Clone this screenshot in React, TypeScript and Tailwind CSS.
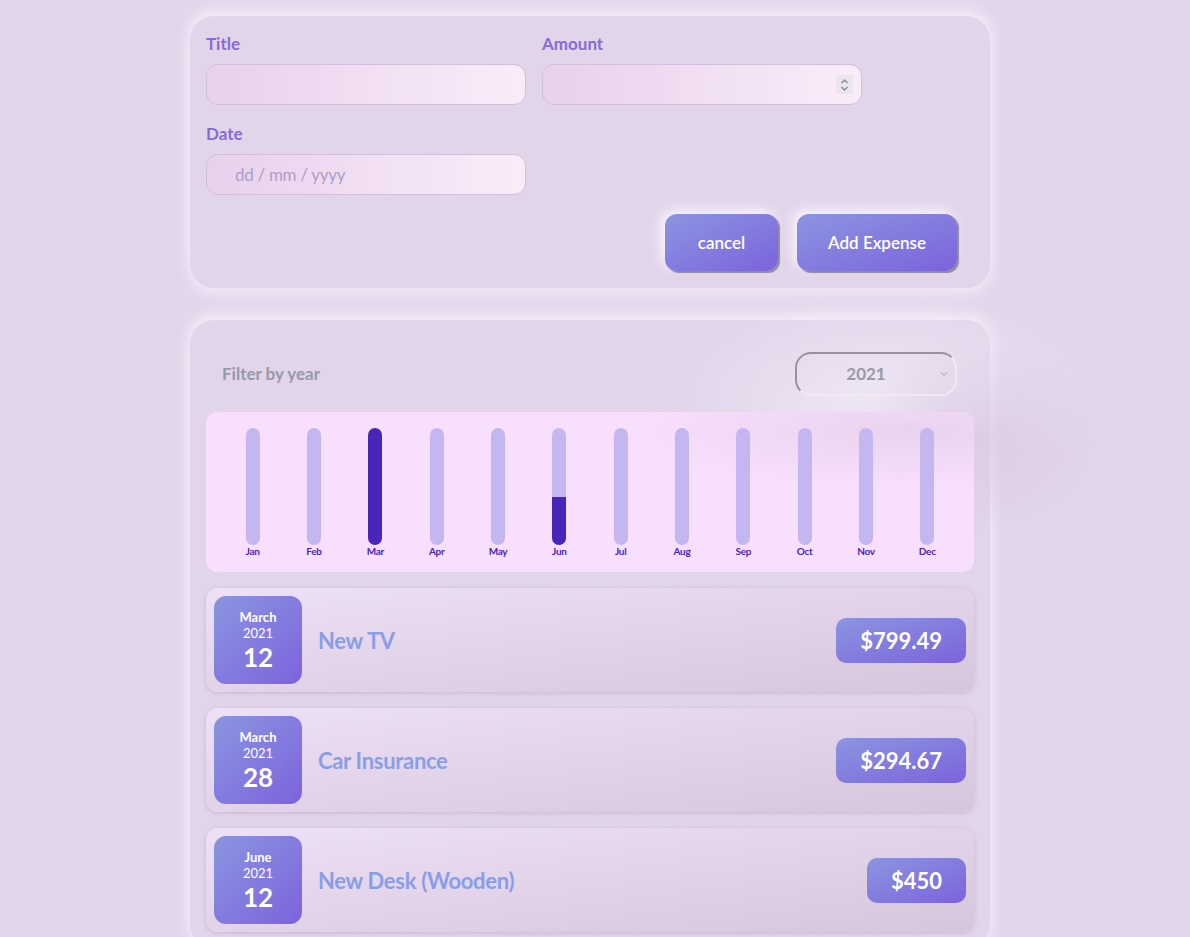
import { ChevronDown } from 'lucide-react';

const MONTHS = [
  { label: 'Jan', fill: 0 },
  { label: 'Feb', fill: 0 },
  { label: 'Mar', fill: 100 },
  { label: 'Apr', fill: 0 },
  { label: 'May', fill: 0 },
  { label: 'Jun', fill: 41 },
  { label: 'Jul', fill: 0 },
  { label: 'Aug', fill: 0 },
  { label: 'Sep', fill: 0 },
  { label: 'Oct', fill: 0 },
  { label: 'Nov', fill: 0 },
  { label: 'Dec', fill: 0 },
];

const EXPENSES = [
  { month: 'March', year: '2021', day: '12', title: 'New TV', amount: '$799.49' },
  { month: 'March', year: '2021', day: '28', title: 'Car Insurance', amount: '$294.67' },
  { month: 'June', year: '2021', day: '12', title: 'New Desk (Wooden)', amount: '$450' },
];

const font = { fontFamily: '"Source Sans Pro", Lato, "Noto Sans", sans-serif' };

const inputCls = 'h-[41px] rounded-xl border border-[#d3bfd9] bg-gradient-to-r from-[#e7d1eb] to-[#fbecfa]';
const labelCls = 'block text-[17px] font-bold text-[#8a6ad9] mb-2 leading-6';
const btnCls =
  'h-[57px] rounded-xl bg-gradient-to-br from-[#8b95e0] to-[#7c62dc] text-white text-[17px] font-semibold shadow-[2px_2px_1px_#8f8a9a,-4px_-4px_12px_#fbf4fd]';

export default function App() {
  return (
    <div className="min-h-[937px] bg-[#e3d6eb] pt-4 overflow-hidden" style={font}>
      <div className="w-[800px] ml-[190px] flex flex-col gap-8">
        {/* new expense form */}
        <form className="rounded-3xl bg-[#e2d5ea] px-4 pt-4 pb-[17px] shadow-[0_-6px_14px_#f6ebf9,0_6px_14px_#f2e6f6]">
          <div className="grid grid-cols-[320px_320px] gap-x-4 gap-y-[17px]">
            <div>
              <label className={labelCls}>Title</label>
              <div className={inputCls} />
            </div>
            <div>
              <label className={labelCls}>Amount</label>
              <div className={`relative ${inputCls}`}>
                <span className="absolute right-[8px] top-[10px] w-[17px] h-[19px] bg-[#ebe5ee] flex items-center justify-center text-[#8c8693]">
                  <svg width="9" height="14" viewBox="0 0 9 14" fill="none" stroke="currentColor" strokeWidth="1.3">
                    <path d="M1.5 5 L4.5 2 L7.5 5" />
                    <path d="M1.5 9 L4.5 12 L7.5 9" />
                  </svg>
                </span>
              </div>
            </div>
            <div>
              <label className={labelCls}>Date</label>
              <div className={`${inputCls} flex items-center pl-[28px] text-[17px] text-[#ad9ec8] tracking-[-0.3px]`}>
                dd / mm / yyyy
              </div>
            </div>
          </div>
          <div className="flex justify-end gap-[19px] mt-[19px] mr-[17px]">
            <button type="button" className={`w-[113px] ${btnCls}`}>
              cancel
            </button>
            <button type="button" className={`w-[160px] ${btnCls}`}>
              Add Expense
            </button>
          </div>
        </form>

        {/* expenses list */}
        <div className="relative rounded-3xl bg-[#e2d5ea] p-4 shadow-[0_-6px_14px_#f6ebf9,0_6px_14px_#f2e6f6]">
          <div className="pointer-events-none absolute left-[480px] top-[-30px] w-[420px] h-[220px] rounded-full bg-[radial-gradient(closest-side,rgba(240,232,246,0.9),rgba(240,232,246,0))]" />
          <div className="pointer-events-none absolute left-[660px] top-[20px] w-[260px] h-[200px] rounded-full bg-[radial-gradient(closest-side,rgba(212,192,220,0.55),rgba(212,192,220,0))]" />

          <div className="relative flex items-center justify-between pl-4 pr-[17px] pt-4 pb-4">
            <span className="text-[17px] font-bold text-[#959aa6]">Filter by year</span>
            <div className="relative w-[162px] h-[44px] rounded-2xl border-2 border-t-[#98929f] border-l-[#98929f] border-r-[#f1e8f4] border-b-[#f1e8f4] flex items-center justify-center pr-5">
              <span className="text-[17px] font-bold text-[#959aa6]">2021</span>
              <ChevronDown className="absolute right-[5px] top-[14px] w-3 h-3 text-[#9a9aa8]" strokeWidth={2} />
            </div>
          </div>

          <div className="relative rounded-xl bg-[radial-gradient(ellipse_at_92%_12%,#e8d3ee,#f8dffd_28%)] px-4 pt-4 pb-4 flex">
            {MONTHS.map((m) => (
              <div key={m.label} className="relative flex-1 flex flex-col items-center">
                <div className="w-[14px] h-[117px] rounded-full bg-[#c4b6f0] overflow-hidden flex flex-col justify-end">
                  <div className="bg-[#4a25b9]" style={{ height: `${m.fill}%` }} />
                </div>
                <span className="mt-[1px] text-[10px] font-bold leading-[10px] text-[#4a25b9] tracking-[-0.3px]">{m.label}</span>
              </div>
            ))}
          </div>

          <ul className="relative mt-4 flex flex-col gap-4">
            {EXPENSES.map((e, i) => (
              <li key={i} className="h-[104px] rounded-xl bg-gradient-to-br from-[#eee0f5] to-[#d6c6db] shadow-[0_1px_4px_rgba(150,120,160,0.35)] p-2 flex items-center">
                <div className="w-[88px] h-[88px] rounded-xl bg-gradient-to-br from-[#8b95e0] to-[#7c62dc] flex flex-col items-center justify-center text-white">
                  <span className="text-[13px] font-bold leading-[16px]">{e.month}</span>
                  <span className="text-[13px] leading-[17px]">{e.year}</span>
                  <span className="text-[26px] font-bold leading-[30px]">{e.day}</span>
                </div>
                <h2 className="ml-4 flex-1 text-[22px] font-bold text-[#889ee8] tracking-[-0.3px]">{e.title}</h2>
                <div className="h-[45px] px-[24px] rounded-[10px] bg-gradient-to-br from-[#8b95e0] to-[#7c62dc] flex items-center text-white text-[22px] font-bold">
                  {e.amount}
                </div>
              </li>
            ))}
          </ul>
        </div>
      </div>
    </div>
  );
}
